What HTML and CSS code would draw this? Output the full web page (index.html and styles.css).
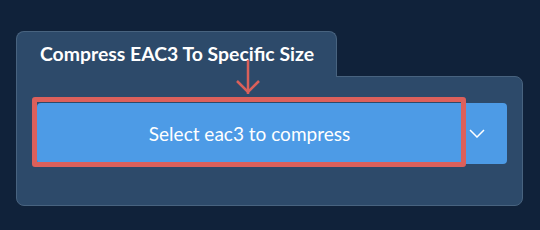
FILE: index.html
```html
<!DOCTYPE html>
<html lang="en">
<head>
<meta charset="utf-8">
<title>Compress EAC3 To Specific Size</title>
<link rel="stylesheet" href="styles.css">
</head>
<body>
<div class="card">
  <div class="tab"><h2 class="tab-title">Compress EAC3 To Specific Size</h2></div>
  <div class="panel">
    <div class="select">
      <div class="select-main">Select eac3 to compress</div>
      <div class="select-caret">
        <svg width="16" height="9" viewBox="0 0 16 9"><polyline points="1,1 8,8 15,1" fill="none" stroke="#ffffff" stroke-width="1.5"/></svg>
      </div>
    </div>
  </div>
  <svg class="arrow" width="26" height="40" viewBox="0 0 26 40">
    <line x1="12" y1="3" x2="12" y2="37" stroke="#d9605a" stroke-width="2.5"/>
    <polyline points="1,24 12,35 23,24" fill="none" stroke="#d9605a" stroke-width="2.5"/>
  </svg>
  <div class="highlight"></div>
</div>
</body>
</html>
```
FILE: styles.css
```css
html, body {
  margin: 0;
  padding: 0;
  background: #10223a;
  font-family: Lato, "Liberation Sans", sans-serif;
}
.card {
  position: relative;
  width: 507px;
  margin: 31px 0 0 16px;
}
.tab {
  position: relative;
  z-index: 1;
  box-sizing: border-box;
  width: 321px;
  height: 46px;
  margin-bottom: -1px;
  padding: 11px 0 0 23px;
  background: #2d4a6a;
  border: 1px solid #48637f;
  border-bottom: none;
  border-radius: 8px 8px 0 0;
}
.tab-title {
  margin: 0;
  font-size: 19.4px;
  line-height: 22px;
  font-weight: 700;
  color: #ffffff;
}
.panel {
  box-sizing: border-box;
  height: 130px;
  padding: 26px 15px 0 20px;
  background: #2d4a6a;
  border: 1px solid #48637f;
  border-radius: 0 8px 8px 8px;
}
.select {
  display: flex;
  height: 61px;
  background: #4d9be6;
  border-radius: 4px;
}
.select-main {
  width: 425px;
  display: flex;
  align-items: center;
  justify-content: center;
  font-size: 19px;
  font-weight: 400;
  color: #ffffff;
}
.select-caret {
  flex: 1;
  display: flex;
  align-items: center;
  padding-left: 7px;
}
.select-caret svg { display: block; }
.arrow {
  position: absolute;
  z-index: 2;
  left: 220px;
  top: 26px;
}
.highlight {
  position: absolute;
  left: 16px;
  top: 66px;
  width: 434px;
  height: 70px;
  box-sizing: border-box;
  border: 5px solid #dc605b;
  border-radius: 3px;
}
```
